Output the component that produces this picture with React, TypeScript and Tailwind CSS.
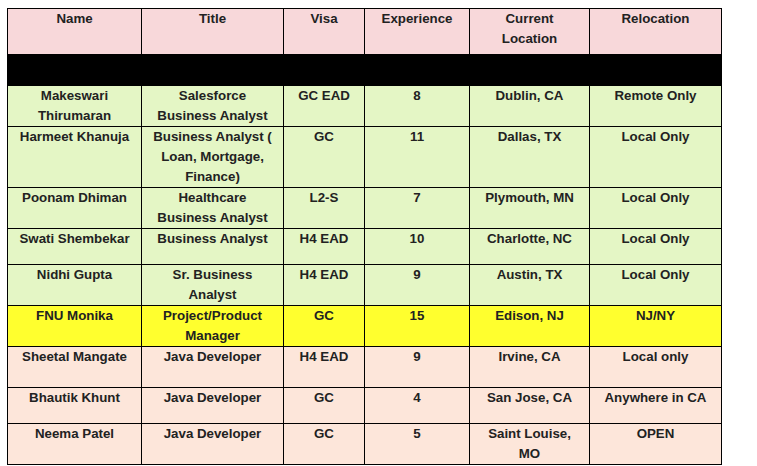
import React from "react";

type Row = { cells: string[]; h: number; bg: string };

const rows: Row[] = [
  { cells: ["Makeswari Thirumaran", "Salesforce Business Analyst", "GC EAD", "8", "Dublin, CA", "Remote Only"], h: 40, bg: "bg-[#e4f6c5]" },
  { cells: ["Harmeet Khanuja", "Business Analyst ( Loan, Mortgage, Finance)", "GC", "11", "Dallas, TX", "Local Only"], h: 61, bg: "bg-[#e4f6c5]" },
  { cells: ["Poonam Dhiman", "Healthcare Business Analyst", "L2-S", "7", "Plymouth, MN", "Local Only"], h: 41, bg: "bg-[#e4f6c5]" },
  { cells: ["Swati Shembekar", "Business Analyst", "H4 EAD", "10", "Charlotte, NC", "Local Only"], h: 36, bg: "bg-[#e4f6c5]" },
  { cells: ["Nidhi Gupta", "Sr. Business Analyst", "H4 EAD", "9", "Austin, TX", "Local Only"], h: 41, bg: "bg-[#e4f6c5]" },
  { cells: ["FNU Monika", "Project/Product Manager", "GC", "15", "Edison, NJ", "NJ/NY"], h: 41, bg: "bg-[#ffff2e]" },
  { cells: ["Sheetal Mangate", "Java Developer", "H4 EAD", "9", "Irvine, CA", "Local only"], h: 41, bg: "bg-[#fde6da]" },
  { cells: ["Bhautik Khunt", "Java Developer", "GC", "4", "San Jose, CA", "Anywhere in CA"], h: 36, bg: "bg-[#fde6da]" },
  { cells: ["Neema Patel", "Java Developer", "GC", "5", "Saint Louise, MO", "OPEN"], h: 41, bg: "bg-[#fde6da]" },
];

const headers = ["Name", "Title", "Visa", "Experience", "Current Location", "Relocation"];
const widths = [134, 142, 81, 105, 120, 132];

export default function App() {
  return (
    <div className="w-[757px] h-[466px] bg-white overflow-hidden pt-[8px] pl-[7px]" style={{ fontFamily: '"Liberation Sans", Arial, sans-serif' }}>
      <table className="table-fixed border-collapse w-[714px] text-[13.3px] leading-[20px] font-bold text-[#222222]">
        <colgroup>
          {widths.map((w, i) => (
            <col key={i} style={{ width: w }} />
          ))}
        </colgroup>
        <tbody>
          <tr className="h-[46px] bg-[#f8d8da]">
            {headers.map((h) => (
              <td key={h} className="border border-black align-top text-center px-2 py-0">
                {h}
              </td>
            ))}
          </tr>
          <tr className="h-[31px] bg-black">
            <td colSpan={6} className="border border-black"></td>
          </tr>
          {rows.map((r, i) => (
            <tr key={i} className={r.bg} style={{ height: r.h }}>
              {r.cells.map((c, j) => (
                <td key={j} className="border border-black align-top text-center px-2 py-0">
                  {c}
                </td>
              ))}
            </tr>
          ))}
        </tbody>
      </table>
    </div>
  );
}
